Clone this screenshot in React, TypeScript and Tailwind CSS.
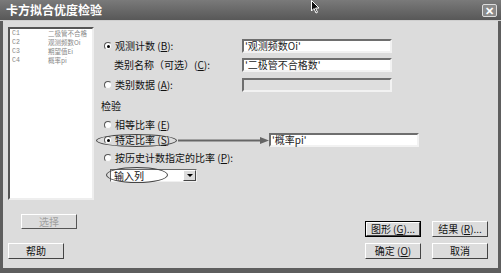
import React from "react";

const cjk = { fontFamily: '"Noto Sans CJK SC", "Liberation Sans", sans-serif' };

function Radio({ on }: { on?: boolean }) {
  return (
    <span className="relative inline-flex h-[8px] w-[8px] shrink-0 items-center justify-center rounded-full border border-t-[#555] border-l-[#555] border-b-[#ddd] border-r-[#ddd] bg-white">
      {on && <span className="h-[3px] w-[3px] rounded-full bg-black" />}
    </span>
  );
}

function Field({ value, disabled, w = "w-[150px]", h = "h-[14px]" }: { value?: string; disabled?: boolean; w?: string; h?: string }) {
  return (
    <div
      className={`${w} ${h} flex items-center border-[2px] border-t-[#6e6e6e] border-l-[#6e6e6e] border-b-[#f2f2f2] border-r-[#f2f2f2] px-[1px] text-[10px] leading-none text-[#222] ${
        disabled ? "bg-[#dedede]" : "bg-white"
      }`}
    >
      {value}
    </div>
  );
}

function Btn({ children, disabled, focus }: { children: React.ReactNode; disabled?: boolean; focus?: boolean }) {
  return (
    <div className={`h-[16px] w-[56px] ${focus ? "border border-black" : ""}`}>
      <div className="flex h-full w-full items-center justify-center border border-t-white border-l-white border-b-[#444] border-r-[#444] bg-[#dcdcdc] text-[10px] leading-none">
        <span className={disabled ? "text-[#9a9a9a]" : "text-[#111]"}>{children}</span>
      </div>
    </div>
  );
}

export default function App() {
  const cols = [
    ["C1", "二极管不合格"],
    ["C2", "观测频数Oi"],
    ["C3", "期望值Ei"],
    ["C4", "概率pi"],
  ];
  return (
    <div className="relative flex h-[273px] w-[501px] flex-col overflow-hidden bg-[#5e5e5e]" style={cjk}>
      {/* title bar */}
      <div className="flex h-[20px] items-center justify-between bg-gradient-to-b from-[#7a7a7a] to-[#585858] pl-[6px] pr-[4px]">
        <span className="text-[12px] font-bold leading-none text-white">卡方拟合优度检验</span>
        <span className="flex h-[13px] w-[15px] items-center justify-center rounded-[2px] border border-[#ddd] bg-[#8a8a8a] text-[11px] font-bold leading-none text-white">
          ✕
        </span>
      </div>
      <div className="h-[1px] bg-[#cfcfcf]" />

      {/* body */}
      <div className="mx-[3px] mb-[5px] flex flex-1 bg-[#dcdcdc]">
        {/* left column */}
        <div className="flex flex-col pl-[5px] pt-[6px]">
          <div className="h-[173px] w-[86px] overflow-hidden border-[2px] border-t-[#555] border-l-[#555] border-b-[#eee] border-r-[#eee] bg-white pl-[2px]">
            {cols.map(([c, n]) => (
              <div key={c} className="flex h-[9px] items-center whitespace-nowrap text-[6.5px] leading-[9px] text-[#888]">
                <span className="w-[36px] shrink-0" style={{ fontFamily: '"Liberation Mono", monospace' }}>
                  {c}
                </span>
                <span>{n}</span>
              </div>
            ))}
          </div>
          <div className="ml-[13px] mt-[14px]">
            <div className="h-[15px] w-[56px] border border-t-white border-l-white border-b-[#555] border-r-[#555] bg-[#dcdcdc] text-center text-[10px] leading-[13px] text-[#a0a0a0]">
              选择
            </div>
          </div>
          <div className="mt-[14px]">
            <Btn>帮助</Btn>
          </div>
        </div>

        {/* right column */}
        <div className="ml-[7px] flex flex-1 flex-col pr-[10px] pt-[18px] text-[10px] leading-none text-[#111]">
          <div className="flex h-[14px] items-center">
            <div className="flex w-[141px] items-center gap-[3px] pl-[3px]">
              <Radio on />
              <span>观测计数 (<u>B</u>):</span>
            </div>
            <Field value="'观测频数Oi'" />
          </div>
          <div className="mt-[5px] flex h-[14px] items-center">
            <div className="w-[141px] pl-[13px]">类别名称（可选）(<u>C</u>):</div>
            <Field value="'二极管不合格数'" />
          </div>
          <div className="mt-[6px] flex h-[14px] items-center">
            <div className="flex w-[141px] items-center gap-[3px] pl-[3px]">
              <Radio />
              <span>类别数据 (<u>A</u>):</span>
            </div>
            <Field disabled />
          </div>

          <div className="mt-[9px] h-[12px]">检验</div>
          <div className="mt-[6px] flex h-[12px] items-center gap-[3px] pl-[3px]">
            <Radio />
            <span>相等比率 (<u>E</u>)</span>
          </div>
          <div className="mt-[2px] flex h-[14px] items-center">
            <div className="flex w-[168px] items-center gap-[3px] pl-[3px]">
              <Radio on />
              <span>特定比率 (<u>S</u>)</span>
            </div>
            <Field value="'概率pi'" />
          </div>
          <div className="mt-[5px] flex h-[12px] items-center gap-[3px] pl-[3px]">
            <Radio />
            <span>按历史计数指定的比率 (<u>P</u>):</span>
          </div>
          <div className="ml-[9px] mt-[5px] flex h-[13px] w-[87px] items-center border border-t-[#666] border-l-[#666] border-b-[#f0f0f0] border-r-[#f0f0f0] bg-white pl-[3px]">
            <span className="flex-1">输入列</span>
            <span className="flex h-[11px] w-[13px] items-center justify-center border border-t-white border-l-white border-b-[#444] border-r-[#444] bg-[#dcdcdc]">
              <span className="h-0 w-0 border-x-[3px] border-t-[3px] border-x-transparent border-t-black" />
            </span>
          </div>

          <div className="mt-[39px] flex flex-col items-end gap-[6px]">
            <div className="flex gap-[11px]">
              <Btn focus>图形 (<u>G</u>)...</Btn>
              <Btn>结果 (<u>R</u>)...</Btn>
            </div>
            <div className="flex gap-[11px]">
              <Btn>确定 (<u>O</u>)</Btn>
              <Btn>取消</Btn>
            </div>
          </div>
        </div>
      </div>

      {/* annotations */}
      <div className="absolute left-[96px] top-[134px] h-[13px] w-[81px] rounded-[50%] border-[1.5px] border-[#444]" />
      <div className="absolute left-[106px] top-[167px] h-[16px] w-[62px] rounded-[50%] border-[1.5px] border-[#444]" />
      <svg className="absolute left-[176px] top-[136px]" width="94" height="9" viewBox="0 0 94 9">
        <line x1="2" y1="4.5" x2="86" y2="4.5" stroke="#666" strokeWidth="2" />
        <path d="M84 1 L93 4.5 L84 8 Z" fill="#666" />
      </svg>
      {/* mouse cursor */}
      <svg className="absolute left-[311px] top-0" width="9" height="14" viewBox="0 0 9 14">
        <path d="M0.5 0.5 L0.5 11 L3 8.5 L5 13 L6.5 12.3 L4.6 8 L8 8 Z" fill="#111" stroke="#fff" strokeWidth="1" />
      </svg>
    </div>
  );
}
